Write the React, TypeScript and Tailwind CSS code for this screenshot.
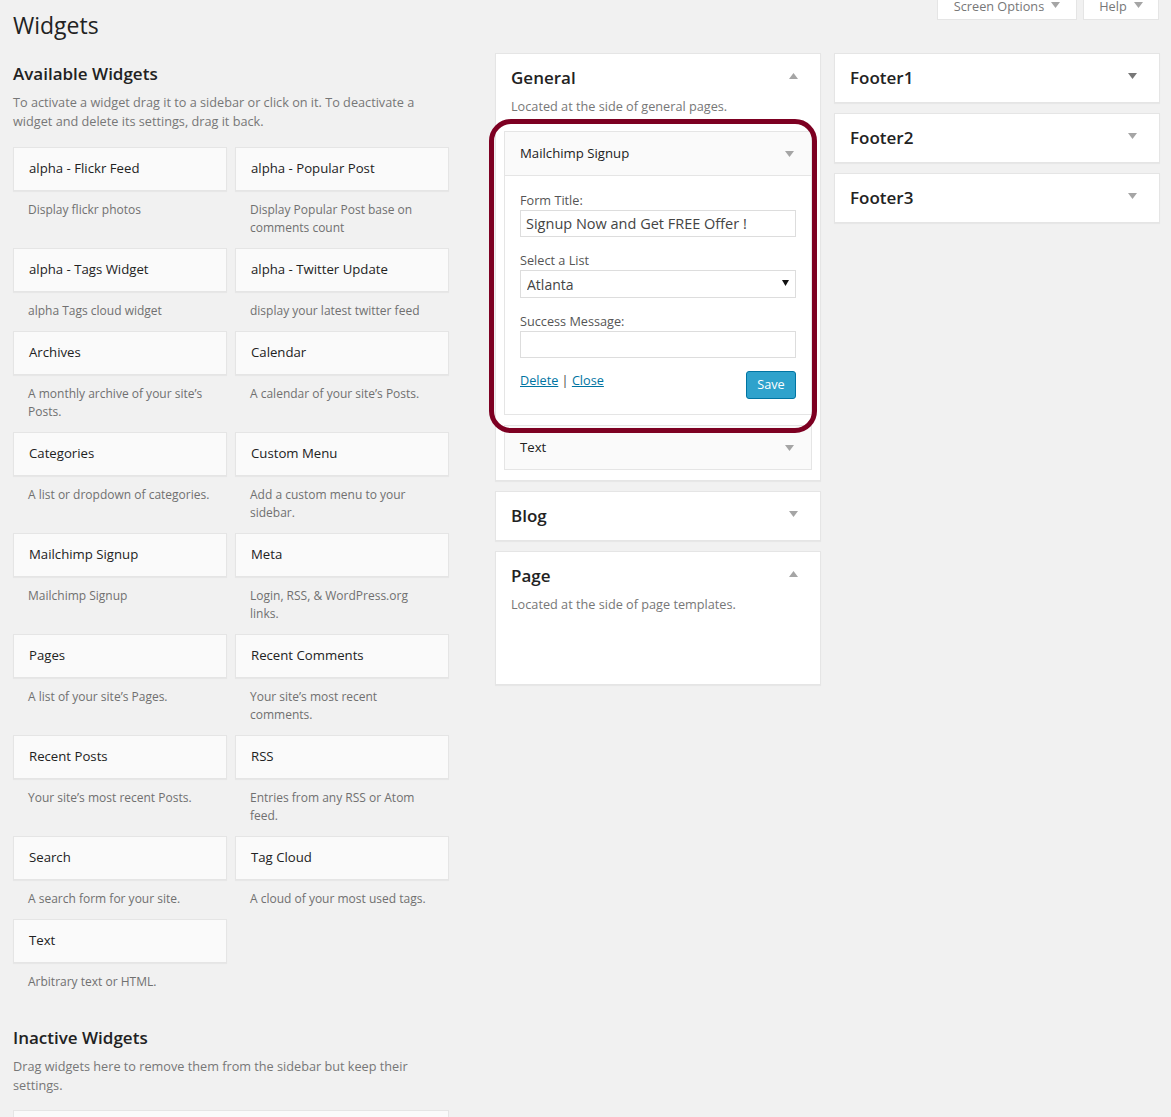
const widgets = [
  { title: "alpha - Flickr Feed", desc: "Display flickr photos" },
  { title: "alpha - Popular Post", desc: "Display Popular Post base on comments count" },
  { title: "alpha - Tags Widget", desc: "alpha Tags cloud widget" },
  { title: "alpha - Twitter Update", desc: "display your latest twitter feed" },
  { title: "Archives", desc: "A monthly archive of your site’s Posts." },
  { title: "Calendar", desc: "A calendar of your site’s Posts." },
  { title: "Categories", desc: "A list or dropdown of categories." },
  { title: "Custom Menu", desc: "Add a custom menu to your sidebar." },
  { title: "Mailchimp Signup", desc: "Mailchimp Signup" },
  { title: "Meta", desc: "Login, RSS, & WordPress.org links." },
  { title: "Pages", desc: "A list of your site’s Pages." },
  { title: "Recent Comments", desc: "Your site’s most recent comments." },
  { title: "Recent Posts", desc: "Your site’s most recent Posts." },
  { title: "RSS", desc: "Entries from any RSS or Atom feed." },
  { title: "Search", desc: "A search form for your site." },
  { title: "Tag Cloud", desc: "A cloud of your most used tags." },
  { title: "Text", desc: "Arbitrary text or HTML." },
];

function Arrow({ up = false, dark = false }: { up?: boolean; dark?: boolean }) {
  return (
    <svg width="9" height="6" viewBox="0 0 9 6" className="block">
      <path d={up ? "M4.5 0L9 6H0z" : "M0 0H9L4.5 6z"} fill={dark ? "#777777" : "#a5a5a5"} />
    </svg>
  );
}

function Sidebar({ title, dark = false }: { title: string; dark?: boolean }) {
  return (
    <div className="flex h-[50px] items-center justify-between border border-[#e5e5e5] bg-white pl-[15px] pr-[22px] shadow-[0_1px_1px_rgba(0,0,0,0.04)]">
      <h3 className="text-[17px] font-semibold text-[#222]">{title}</h3>
      <div className="-mt-[4px]">
        <Arrow dark={dark} />
      </div>
    </div>
  );
}

export default function App() {
  return (
    <div className="relative h-[1117px] overflow-hidden bg-[#f1f1f1] font-['Open_Sans',sans-serif] text-[12.7px] text-[#444]">
      {/* Screen options tabs */}
      <div className="absolute right-[12px] top-0 flex gap-[6px] text-[#777]">
        <div className="flex h-[20px] w-[140px] items-end justify-center gap-[7px] border border-t-0 border-[#e5e5e5] bg-white pb-[7px] leading-[12px]">
          <span>Screen Options</span>
          <span className="pb-[4px]"><Arrow /></span>
        </div>
        <div className="flex h-[20px] w-[76px] items-end justify-center gap-[7px] border border-t-0 border-[#e5e5e5] bg-white pb-[7px] leading-[12px]">
          <span>Help</span>
          <span className="pb-[4px]"><Arrow /></span>
        </div>
      </div>

      <div className="flex pl-[13px]">
        {/* Available widgets */}
        <div className="w-[436px]">
          <h1 className="mt-[9px] text-[23px] leading-[32px] text-[#222]">Widgets</h1>
          <h2 className="mt-[17px] text-[17px] font-semibold leading-[32px] text-[#222]">Available Widgets</h2>
          <p className="mt-[3px] leading-[19px] text-[#777]">
            To activate a widget drag it to a sidebar or click on it. To deactivate a widget and delete its settings, drag it back.
          </p>
          <div className="mt-[16px] grid grid-cols-[214px_214px] gap-x-[8px]">
            {widgets.map((w) => (
              <div key={w.title} className="pb-[11px]">
                <div className="flex h-[44px] items-center border border-[#e5e5e5] bg-[#fafafa] pl-[15px] text-[13.2px] font-medium text-[#222] shadow-[0_1px_1px_rgba(0,0,0,0.04)]">
                  {w.title}
                </div>
                <p className="mt-[10px] pl-[15px] pr-[10px] text-[12px] leading-[18px] text-[#707070]">{w.desc}</p>
              </div>
            ))}
          </div>
          <h2 className="mt-[20px] text-[17px] font-semibold leading-[32px] text-[#222]">Inactive Widgets</h2>
          <p className="mt-[3px] leading-[19px] text-[#777]">
            Drag widgets here to remove them from the sidebar but keep their settings.
          </p>
          <div className="mt-[15px] h-[60px] border border-[#e5e5e5] bg-[#fafafa]" />
        </div>

        {/* General, Blog, Page */}
        <div className="ml-[46px] mt-[53px] flex w-[326px] flex-col gap-[10px]">
          <div className="h-[428px] border border-[#e5e5e5] bg-white px-[8px] shadow-[0_1px_1px_rgba(0,0,0,0.04)]">
            <div className="flex items-center justify-between pl-[7px] pr-[14px] pt-[11px]">
              <h3 className="text-[17px] font-semibold leading-[26px] text-[#222]">General</h3>
              <div className="-mt-[4px]"><Arrow up /></div>
            </div>
            <p className="mt-[6px] pl-[7px] leading-[19px] text-[#777]">Located at the side of general pages.</p>

            <div className="mt-[15px] border border-[#e5e5e5] bg-white">
              <div className="flex h-[44px] items-center justify-between border-b border-[#e5e5e5] bg-[#fafafa] pl-[15px] pr-[17px]">
                <span className="text-[13.2px] font-medium text-[#222]">Mailchimp Signup</span>
                <Arrow />
              </div>
              <div className="h-[238px] px-[15px] pt-[15px]">
                <label className="block leading-[19px] text-[#555]">Form Title:</label>
                <input
                  readOnly
                  value="Signup Now and Get FREE Offer !"
                  className="block h-[27px] w-[276px] border border-[#ddd] bg-white px-[5px] pb-[1px] text-[14.5px] text-[#444] outline-none"
                />
                <label className="mt-[14px] block leading-[19px] text-[#555]">Select a List</label>
                <div className="relative">
                  <select className="block h-[28px] w-[276px] appearance-none border border-[#ddd] bg-white px-[6px] text-[14px] text-[#444] outline-none">
                    <option>Atlanta</option>
                  </select>
                  <svg width="7" height="6" viewBox="0 0 7 6" className="absolute right-[7px] top-[10px]">
                    <path d="M0 0H7L3.5 6z" fill="#111" />
                  </svg>
                </div>
                <label className="mt-[14px] block leading-[19px] text-[#555]">Success Message:</label>
                <input readOnly className="block h-[27px] w-[276px] border border-[#ddd] bg-white px-[5px] outline-none" />
                <div className="mt-[13px] flex items-start justify-between">
                  <div className="leading-[19px] text-[#444]">
                    <a className="text-[#0074a2] underline">Delete</a> | <a className="text-[#0074a2] underline">Close</a>
                  </div>
                  <button className="h-[28px] w-[50px] rounded-[3px] border border-[#0074a2] bg-[#2ea2cc] text-[12.7px] text-white">Save</button>
                </div>
              </div>
            </div>

            <div className="mt-[10px] flex h-[45px] items-center justify-between border border-[#e5e5e5] bg-[#fafafa] pl-[15px] pr-[17px]">
              <span className="text-[13.2px] font-medium text-[#222]">Text</span>
              <Arrow />
            </div>
          </div>

          <Sidebar title="Blog" />

          <div className="h-[134px] border border-[#e5e5e5] bg-white pl-[15px] pr-[22px] pt-[11px] shadow-[0_1px_1px_rgba(0,0,0,0.04)]">
            <div className="flex items-center justify-between">
              <h3 className="text-[17px] font-semibold leading-[26px] text-[#222]">Page</h3>
              <div className="-mt-[4px]"><Arrow up /></div>
            </div>
            <p className="mt-[6px] leading-[19px] text-[#777]">Located at the side of page templates.</p>
          </div>
        </div>

        {/* Footers */}
        <div className="ml-[13px] mt-[53px] flex w-[326px] flex-col gap-[10px]">
          <Sidebar title="Footer1" dark />
          <Sidebar title="Footer2" />
          <Sidebar title="Footer3" />
        </div>
      </div>

      {/* Highlight drawn over the open widget */}
      <div className="pointer-events-none absolute left-[489px] top-[119px] h-[314px] w-[328px] rounded-[22px] border-[5px] border-[#7d0022]" />
    </div>
  );
}
